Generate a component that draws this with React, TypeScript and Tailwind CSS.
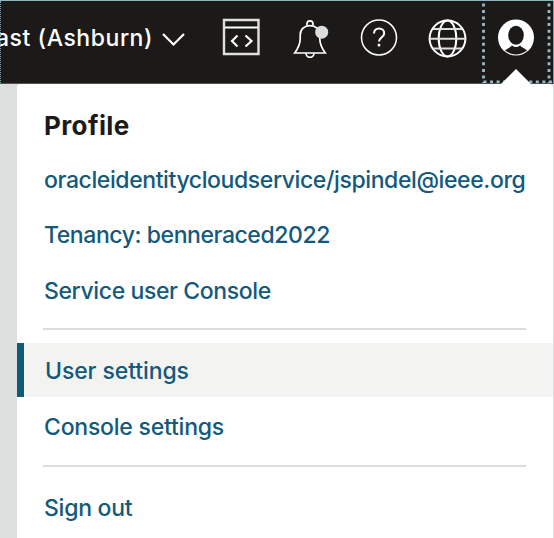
const linkStyle = "block whitespace-nowrap font-medium text-[#13597b]";

function Divider() {
  return <hr className="ml-[26px] mr-[27px] h-[2px] border-0 bg-[#dcdddc]" />;
}

function CodeIcon() {
  return (
    <svg width="38" height="38" viewBox="0 0 38 38" fill="none" stroke="#fff">
      <path d="M2 2H36.500V36H2Z" stroke="#e0e0df" strokeWidth="2.400" />
      <path d="M3 9.500H36" strokeWidth="2" />
      <path d="M15.500 17.500L10 23L15.500 28.500M23.500 17.500L29.500 23L23.500 28.500" strokeWidth="2.200" />
    </svg>
  );
}

function BellIcon() {
  return (
    <svg width="36" height="40" viewBox="0 0 36 40" fill="none" stroke="#fff" strokeWidth="1.7">
      <path d="M14 7.600V5.800a3 3 0 0 1 6 0v1.800" />
      <path d="M1.700 35C5 30.500 7.200 26.500 7.200 21V17C7.200 11 11.500 7.600 17 7.600S26.800 11 26.800 17v4c0 5.500 2.200 9.500 5.500 14Z" />
      <path d="M13 35.300a4 4 0 0 0 8 0" />
      <circle cx="28.700" cy="14.200" r="6.500" fill="#dcdddc" stroke="none" />
    </svg>
  );
}

function HelpIcon() {
  return (
    <svg width="38" height="38" viewBox="0 0 38 38" fill="none" stroke="#fff" strokeWidth="1.5">
      <circle cx="19" cy="19.500" r="17.500" />
      <path d="M14 15.500c0-3.200 2.300-5 5.100-5s5.100 1.800 5.100 4.700c0 4.200-5.200 4.500-5.200 8.300" strokeWidth="2" />
      <path d="M19 25.800v2.600" strokeWidth="2.500" />
    </svg>
  );
}

function GlobeIcon() {
  return (
    <svg width="40" height="40" viewBox="0 0 40 40" fill="none" stroke="#fff" strokeWidth="2">
      <circle cx="20.500" cy="20.500" r="17.900" />
      <ellipse cx="20.500" cy="20.500" rx="8.800" ry="17.900" />
      <path d="M6 11h29M2.700 20.800h35.600M6 30.500h29" stroke="#dededd" />
    </svg>
  );
}

function UserIcon() {
  return (
    <svg width="38" height="38" viewBox="0 0 38 38">
      <circle cx="19" cy="19.500" r="18" fill="#fff" />
      <ellipse cx="19" cy="17.300" rx="7.800" ry="9.500" fill="#1b1a18" />
      <path d="M8 32.500C10.500 30 13.500 29.500 15 27.500Q19 30.500 23 27.500C24.500 29.500 27.500 30 30 32.500Q19 40.500 8 32.500Z" fill="#1b1a18" />
    </svg>
  );
}

export default function App() {
  return (
    <div className="flex h-[538px] w-[554px] flex-col overflow-hidden bg-[#dcdfde] font-['Inter','Liberation_Sans',sans-serif] text-[23px] leading-[28px]">
      <header className="relative flex h-[84px] shrink-0 border-b border-t border-b-[#55544f] border-t-[#8fb5c1] bg-[#1b1a18] text-white">
        <div className="absolute left-0 top-0 h-full w-px border-l border-dotted border-[#78a9ba]" />
        <div className="flex w-[222px] shrink-0 items-start pt-[23px]">
          <span className="ml-[-4px] w-[157px] shrink-0 whitespace-nowrap font-medium tracking-[0.55px]">ast (Ashburn)</span>
          <svg className="ml-[8px] mt-[8px] shrink-0" width="26" height="16" viewBox="0 0 26 16" fill="none" stroke="#fff" strokeWidth="2.2">
            <path d="M2 2L12.500 12.500L23 2" />
          </svg>
        </div>
        <div className="flex w-[260px] shrink-0 items-start pt-[17px]">
          <div className="w-[71px]"><CodeIcon /></div>
          <div className="w-[67px]"><BellIcon /></div>
          <div className="w-[67px]"><HelpIcon /></div>
          <GlobeIcon />
        </div>
        <div className="relative h-[82px] w-[71px] shrink-0">
          <svg className="absolute inset-0" width="72" height="82" viewBox="0 0 72 82" fill="none" stroke="#98bac4" strokeWidth="2.800" strokeDasharray="3 3.540">
            <path d="M1.500 2.500V82M67 2.500V82M1.500 81H70" />
          </svg>
          <div className="absolute left-[15px] top-[17px]"><UserIcon /></div>
          <svg className="absolute left-[19px] top-[68px]" width="30" height="15" viewBox="0 0 30 15">
            <path d="M0 15L15 0L30 15Z" fill="#fff" />
          </svg>
        </div>
        <div className="h-full w-px bg-[#78a0ad]" />
      </header>
      <main className="ml-[17px] flex w-[536px] grow flex-col rounded-t-[4px] bg-white">
        <h1 className="ml-[27px] mt-[28px] text-[26px] font-bold leading-[28px] tracking-[0.4px] text-[#1b1a18]">Profile</h1>
        <nav className="flex flex-col">
          <a className={`${linkStyle} ml-[27px] mt-[26px] tracking-[-0.4px]`}>oracleidentitycloudservice/jspindel@ieee.org</a>
          <a className={`${linkStyle} ml-[27px] mt-[27px] tracking-[-0.43px]`}>Tenancy: benneraced2022</a>
          <a className={`${linkStyle} mb-[23px] ml-[27px] mt-[28px] tracking-[-0.38px]`}>Service user Console</a>
          <Divider />
          <a className={`${linkStyle} mt-[13px] h-[54px] border-l-[7px] border-[#13597b] bg-[#f3f3f1] pl-[21px] pt-[14px] tracking-[-0.1px]`}>User settings</a>
          <a className={`${linkStyle} mb-[24px] ml-[27px] mt-[16px] tracking-[-0.22px]`}>Console settings</a>
          <Divider />
          <a className={`${linkStyle} ml-[27px] mt-[27px] tracking-[-0.25px]`}>Sign out</a>
        </nav>
      </main>
    </div>
  );
}
